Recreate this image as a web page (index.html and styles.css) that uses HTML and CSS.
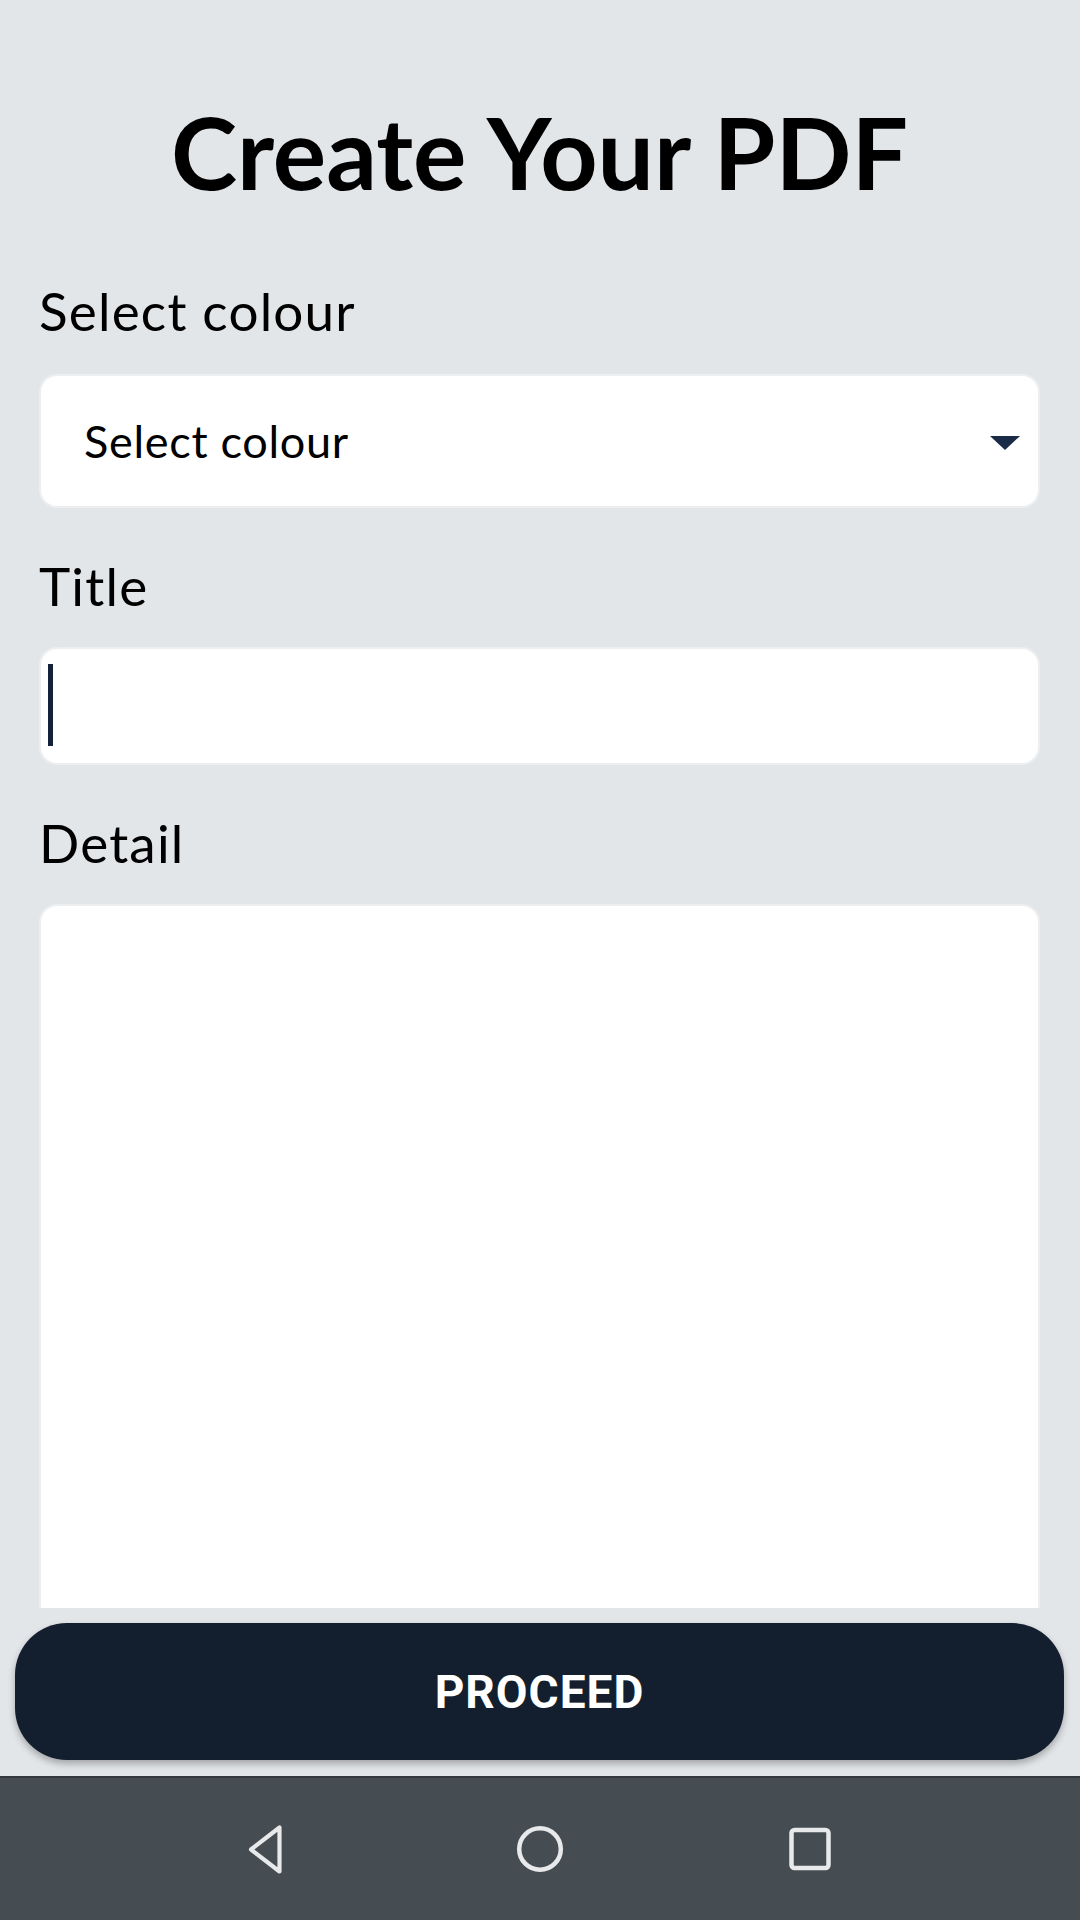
FILE: index.html
```html
<!DOCTYPE html>
<html lang="en">
<head>
<meta charset="utf-8">
<title>Create Your PDF</title>
<link rel="stylesheet" href="styles.css">
</head>
<body>
<div class="screen">
  <main class="content">
    <h1 class="title">Create Your PDF</h1>

    <div class="label">Select colour</div>
    <div class="field select">
      <span class="select-text">Select colour</span>
      <svg class="caret" width="30" height="14" viewBox="0 0 30 14"><path d="M0 0H30L15 14Z" fill="#1a2b47"/></svg>
    </div>

    <div class="label label-gap">Title</div>
    <div class="field input">
      <span class="text-cursor"></span>
    </div>

    <div class="label label-gap">Detail</div>
    <div class="field textarea"></div>
  </main>

  <footer class="footer">
    <button class="proceed">PROCEED</button>
  </footer>

  <nav class="navbar">
    <svg class="nav-icon" width="60" height="60" viewBox="0 0 60 60">
      <path d="M39.5 8.5 V52.5 L11 30.5 Z" fill="none" stroke="#e8e9ea" stroke-width="4.2" stroke-linejoin="round"/>
    </svg>
    <svg class="nav-icon" width="60" height="60" viewBox="0 0 60 60">
      <circle cx="30" cy="30" r="20.8" fill="none" stroke="#e8e9ea" stroke-width="4.5"/>
    </svg>
    <svg class="nav-icon" width="60" height="60" viewBox="0 0 60 60">
      <rect x="11.5" y="11" width="37" height="38" rx="3" fill="none" stroke="#e8e9ea" stroke-width="4.5"/>
    </svg>
  </nav>
</div>
</body>
</html>
```

FILE: styles.css
```css
* {
  box-sizing: border-box;
}

html, body {
  margin: 0;
  padding: 0;
}

body {
  width: 1080px;
  height: 1920px;
  background: #e3e6e9;
  font-family: Lato, "Noto Sans", sans-serif;
  color: #000;
  overflow: hidden;
}

.screen {
  width: 1080px;
  height: 1920px;
  display: flex;
  flex-direction: column;
}

.content {
  flex: 1;
  min-height: 0;
  overflow: hidden;
  padding: 91px 42px 0 41px;
  display: flex;
  flex-direction: column;
}

.title {
  margin: 0;
  font-size: 100px;
  line-height: 120px;
  font-weight: 700;
  text-align: center;
  color: #000;
}

.label {
  margin-top: 70px;
  margin-left: -2px;
  font-size: 53px;
  line-height: 60px;
  letter-spacing: 1.2px;
  font-weight: 400;
  color: #000;
}

.label-gap {
  margin-top: 50px;
}

.field {
  margin-top: 35px;
  background: #fff;
  border-radius: 16px;
  box-shadow: 0 0 0 2px #eceef0;
  flex-shrink: 0;
}

.select {
  height: 130px;
  display: flex;
  align-items: center;
  justify-content: space-between;
  padding: 0 18px 0 43px;
}

.select-text {
  font-size: 45px;
  line-height: 50px;
  letter-spacing: 0.7px;
  color: #000;
}

.caret {
  display: block;
  margin-top: 4px;
}

.input {
  margin-top: 33px;
  height: 114px;
  display: flex;
  align-items: center;
  padding-left: 7px;
}

.text-cursor {
  display: block;
  width: 5px;
  height: 82px;
  margin-top: -2px;
  background: #14213a;
}

.textarea {
  margin-top: 33px;
  height: 780px;
}

.footer {
  height: 168px;
  flex-shrink: 0;
  padding: 15px 16px 16px 15px;
  display: flex;
}

.proceed {
  flex: 1;
  border: none;
  border-radius: 52px;
  background: #131f2e;
  color: #fff;
  font-family: Roboto, "Liberation Sans", sans-serif;
  font-weight: 700;
  font-size: 46px;
  letter-spacing: 1px;
  box-shadow: 0 4px 7px rgba(0, 0, 0, 0.28);
  padding: 0;
}

.navbar {
  height: 144px;
  flex-shrink: 0;
  background: #454c52;
  border-top: 2px solid #33393e;
  display: flex;
  align-items: center;
  justify-content: center;
  gap: 210px;
}

.nav-icon {
  display: block;
}
```
